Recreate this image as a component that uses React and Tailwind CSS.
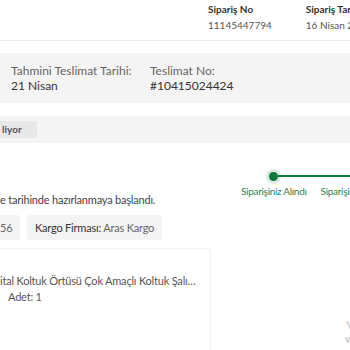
export default function App() {
  return (
    <div className="w-[350px] h-[350px] overflow-hidden bg-white text-[#333] font-['Lato','Noto_Sans',sans-serif]">
      {/* header */}
      <div className="h-[41px] border-b border-[#eeeeee] flex pl-[208px] pt-[1px] gap-[34px] whitespace-nowrap">
        <div className="w-[65px]">
          <div className="text-[10px] font-bold text-[#333] leading-[16px]">Sipariş No</div>
          <div className="text-[10px] text-[#555] leading-[16px]">11145447794</div>
        </div>
        <div>
          <div className="text-[10px] font-bold text-[#333] leading-[16px]">Sipariş Tarihi</div>
          <div className="text-[10px] text-[#555] leading-[16px]">16 Nisan 2024</div>
        </div>
      </div>

      {/* delivery info */}
      <div className="mt-[12px] h-[50px] bg-[#f4f4f4] flex pl-[11px] pt-[10px] gap-[28px] text-[12px] leading-[15px] whitespace-nowrap">
        <div className="w-[111px]">
          <div className="text-[#666]">Tahmini Teslimat Tarihi:</div>
          <div className="text-[#333]">21 Nisan</div>
        </div>
        <div>
          <div className="text-[#666]">Teslimat No:</div>
          <div className="text-[#333]">#10415024424</div>
        </div>
      </div>

      {/* status band */}
      <div className="mt-[13px] h-[27px] bg-[#f4f4f4] flex items-center">
        <span className="h-[17px] px-[2px] w-[37px] bg-[#e8e8e8] rounded-r-[3px] text-[10px] font-bold text-[#555] leading-[17px]">liyor</span>
      </div>

      {/* progress + text */}
      <div className="relative h-[105px]">
        <div className="absolute left-[241px] top-[28px] flex flex-col whitespace-nowrap">
          <div className="flex items-center h-[10px] pl-[28px]">
            <span className="w-[9px] h-[9px] rounded-full bg-[#0b7a3e] ring-[3px] ring-[#0b7a3e]/15"></span>
            <span className="h-[2px] w-[80px] bg-[#0b7a3e]"></span>
          </div>
          <div className="flex gap-[14px] mt-[4px] text-[10px] tracking-[-0.3px] leading-[13px] text-[#2a8455]">
            <span>Siparişiniz Alındı</span>
            <span>Siparişiniz Hazırlanıyor</span>
          </div>
        </div>
        <div className="pt-[49px] text-[11px] tracking-[-0.2px] leading-[16px] text-[#444] whitespace-nowrap">e tarihinde hazırlanmaya başlandı.</div>
        <div className="mt-[7px] flex gap-[7px] text-[11px] tracking-[-0.2px] whitespace-nowrap">
          <span className="h-[25px] w-[20px] bg-[#f4f4f4] rounded-r-[3px] leading-[25px] text-[#666]">56</span>
          <span className="h-[25px] px-[8px] bg-[#f4f4f4] rounded-[3px] leading-[25px] text-[#666]">
            <span className="text-[#333]">Kargo Firması: </span>Aras Kargo
          </span>
        </div>
      </div>

      {/* product card */}
      <div className="flex h-[102px]">
        <div className="w-[211px] border-r border-t border-[#f1f1f1] rounded-tr-[3px] pt-[24px] text-[11px] tracking-[-0.2px] leading-[16px] text-[#555] whitespace-nowrap">
          <div>ital Koltuk Örtüsü Çok Amaçlı Koltuk Şalı…</div>
          <div className="pl-[8px]">Adet: 1</div>
        </div>
        <div className="flex-1 flex flex-col items-end pt-[70px] text-[11px] leading-[14px] text-[#bbb] overflow-hidden">
          <span className="mr-[-4px]">V</span>
          <span className="mr-[-4px]">w</span>
        </div>
      </div>
    </div>
  );
}
